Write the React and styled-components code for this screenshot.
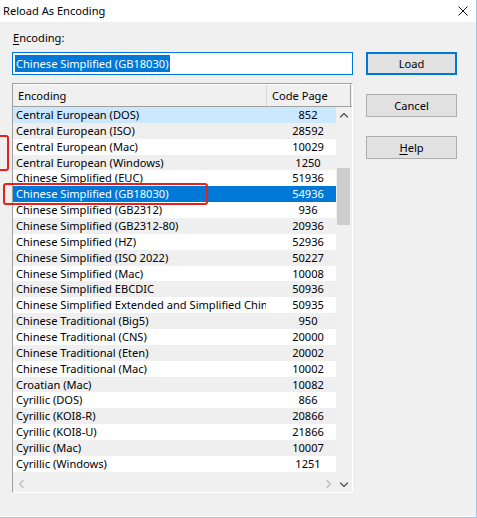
import React from 'react';
import styled, { createGlobalStyle } from 'styled-components';

const FONT = `"Noto Sans", "Noto Sans CJK SC", sans-serif`;

const GlobalStyle = createGlobalStyle`
  html, body { margin: 0; padding: 0; background: #fff; overflow: hidden; }
  body { font-family: ${FONT}; font-size: 11.1px; color: #000; }
  * { box-sizing: border-box; }
`;

const ROWS = [
  ['Central European (DOS)', '852'],
  ['Central European (ISO)', '28592'],
  ['Central European (Mac)', '10029'],
  ['Central European (Windows)', '1250'],
  ['Chinese Simplified (EUC)', '51936'],
  ['Chinese Simplified (GB18030)', '54936'],
  ['Chinese Simplified (GB2312)', '936'],
  ['Chinese Simplified (GB2312-80)', '20936'],
  ['Chinese Simplified (HZ)', '52936'],
  ['Chinese Simplified (ISO 2022)', '50227'],
  ['Chinese Simplified (Mac)', '10008'],
  ['Chinese Simplified EBCDIC', '50936'],
  ['Chinese Simplified Extended and Simplified Chinese', '50935'],
  ['Chinese Traditional (Big5)', '950'],
  ['Chinese Traditional (CNS)', '20000'],
  ['Chinese Traditional (Eten)', '20002'],
  ['Chinese Traditional (Mac)', '10002'],
  ['Croatian (Mac)', '10082'],
  ['Cyrillic (DOS)', '866'],
  ['Cyrillic (KOI8-R)', '20866'],
  ['Cyrillic (KOI8-U)', '21866'],
  ['Cyrillic (Mac)', '10007'],
  ['Cyrillic (Windows)', '1251'],
  ['Cyrillic (ISO)', '28595'],
];

const Window = styled.div`
  width: 477px;
  height: 518px;
  display: flex;
  flex-direction: column;
  border-right: 1px solid #a6c6e6;
  border-bottom: 1px solid #a6c6e6;
  position: relative;
  overflow: hidden;
`;

const TitleBar = styled.div`
  height: 22px;
  flex: none;
  background: #fff;
  display: flex;
  align-items: center;
  justify-content: space-between;
  padding: 0 8px 0 3px;
`;

const Title = styled.span`
  line-height: 16px;
  color: #000;
`;

const CloseIcon = styled.svg`
  width: 10px;
  height: 10px;
`;

const Body = styled.div`
  flex: 1;
  background: #f0f0f0;
  display: flex;
  gap: 13px;
  padding: 8px 0 0 12px;
  border-bottom: 1px solid #fff;
`;

const LeftColumn = styled.div`
  width: 341px;
  display: flex;
  flex-direction: column;
`;

const Label = styled.div`
  height: 16px;
  line-height: 16px;
  margin-bottom: 6px;
  padding-left: 1px;
  u { text-decoration: underline; text-underline-offset: 2px; }
`;

const TextField = styled.div`
  height: 23px;
  border: 1px solid #0078d7;
  background: #fff;
  padding: 2px 0 0 2px;
  margin-bottom: 8px;
  display: flex;
`;

const Selection = styled.span`
  background: #0078d7;
  color: #fff;
  height: 17px;
  line-height: 17px;
  padding: 0 1px;
`;

const List = styled.div`
  height: 410px;
  border-top: 1px solid #a0a0a0;
  border-left: 1px solid #a0a0a0;
  border-right: 1px solid #fff;
  border-bottom: 1px solid #fff;
  background: #fff;
  display: flex;
  flex-direction: column;
`;

const Header = styled.div`
  height: 23px;
  flex: none;
  display: grid;
  grid-template-columns: 254px 84px;
  background: #f0f0f0;
  border-bottom: 1px solid #a0a0a0;
`;

const HeaderCell = styled.div`
  border-right: 1px solid ${p => (p.$last ? '#a0a0a0' : '#d8d8d8')};
  border-top: 1px solid #fff;
  padding-left: 5px;
  line-height: 21px;
  white-space: nowrap;
`;

const ListBody = styled.div`
  flex: 1;
  display: grid;
  grid-template-columns: 323px 16px;
  grid-template-rows: 1fr 16px;
  min-height: 0;
`;

const Viewport = styled.div`
  overflow: hidden;
  background: #fff;
`;

const Row = styled.div`
  height: 15.87px;
  width: 337px;
  display: grid;
  grid-template-columns: 253px 84px;
  line-height: 16px;
  background: ${p =>
    p.$selected ? '#0078d7' : p.$hot ? '#cce8ff' : p.$odd ? '#efefef' : '#fff'};
  color: ${p => (p.$selected ? '#fff' : '#000')};
`;

const NameCell = styled.div`
  padding-left: 3px;
  white-space: nowrap;
  overflow: hidden;
`;

const CodeCell = styled.div`
  text-align: center;
  white-space: nowrap;
`;

const VScroll = styled.div`
  grid-column: 2;
  grid-row: 1 / 3;
  background: #f0f0f0;
  display: flex;
  flex-direction: column;
`;

const ArrowBox = styled.div`
  width: 16px;
  height: 16px;
  flex: none;
  display: flex;
  align-items: center;
  justify-content: center;
`;

const Track = styled.div`
  flex: 1;
  padding-top: ${p => p.$offset}px;
  padding-left: 1px;
`;

const Thumb = styled.div`
  width: 13px;
  height: ${p => p.$size}px;
  background: #cdcdcd;
`;

const HScroll = styled.div`
  grid-column: 1;
  grid-row: 2;
  background: #f0f0f0;
  display: flex;
  justify-content: space-between;
`;

const RightColumn = styled.div`
  width: 91px;
  padding-top: 22px;
  display: flex;
  flex-direction: column;
  gap: 19px;
`;

const Button = styled.div`
  height: 23px;
  background: #e1e1e1;
  border: 1px solid ${p => (p.$default ? '#0078d7' : '#adadad')};
  box-shadow: ${p => (p.$default ? 'inset 0 0 0 1px #0078d7' : 'none')};
  display: flex;
  align-items: center;
  justify-content: center;
  line-height: 16px;
  u { text-decoration: underline; text-underline-offset: 2px; }
`;

const Annotation = styled.div`
  position: absolute;
  border: 2px solid #e8201c;
  border-radius: 3px;
  left: ${p => p.$x}px;
  top: ${p => p.$y}px;
  width: ${p => p.$w}px;
  height: ${p => p.$h}px;
  pointer-events: none;
`;

const Chevron = ({ dir, color }) => {
  const pts = {
    up: '0,4 3.5,0.5 7,4',
    down: '0,0.5 3.5,4 7,0.5',
    left: '4,0 0.5,3.5 4,7',
    right: '0.5,0 4,3.5 0.5,7',
  }[dir];
  const vertical = dir === 'up' || dir === 'down';
  return (
    <svg width={vertical ? 8 : 5} height={vertical ? 5 : 8} viewBox={vertical ? '0 0 7 4.5' : '0 0 4.5 7'}>
      <polyline points={pts} fill="none" stroke={color} strokeWidth="1.4" />
    </svg>
  );
};

export default function App() {
  return (
    <>
      <GlobalStyle />
      <Window>
        <TitleBar>
          <Title>Reload As Encoding</Title>
          <CloseIcon viewBox="0 0 10 10">
            <path d="M0.5 0.5 L9.5 9.5 M9.5 0.5 L0.5 9.5" stroke="#111" strokeWidth="1" fill="none" />
          </CloseIcon>
        </TitleBar>
        <Body>
          <LeftColumn>
            <Label><u>E</u>ncoding:</Label>
            <TextField>
              <Selection>Chinese Simplified (GB18030)</Selection>
            </TextField>
            <List>
              <Header>
                <HeaderCell>Encoding</HeaderCell>
                <HeaderCell $last>Code Page</HeaderCell>
              </Header>
              <ListBody>
                <Viewport>
                  {ROWS.map(([name, code], i) => (
                    <Row key={name} $odd={i % 2 === 1} $hot={i === 0} $selected={i === 5}>
                      <NameCell>{name}</NameCell>
                      <CodeCell>{code}</CodeCell>
                    </Row>
                  ))}
                </Viewport>
                <VScroll>
                  <ArrowBox><Chevron dir="up" color="#606060" /></ArrowBox>
                  <Track $offset={45}><Thumb $size={57} /></Track>
                  <ArrowBox><Chevron dir="down" color="#606060" /></ArrowBox>
                </VScroll>
                <HScroll>
                  <ArrowBox><Chevron dir="left" color="#c2c2c2" /></ArrowBox>
                  <ArrowBox><Chevron dir="right" color="#c2c2c2" /></ArrowBox>
                </HScroll>
              </ListBody>
            </List>
          </LeftColumn>
          <RightColumn>
            <Button $default>Load</Button>
            <Button>Cancel</Button>
            <Button><span><u>H</u>elp</span></Button>
          </RightColumn>
        </Body>
        <Annotation $x={-5} $y={135} $w={14} $h={36} />
        <Annotation $x={3} $y={183} $w={205} $h={22} />
      </Window>
    </>
  );
}
